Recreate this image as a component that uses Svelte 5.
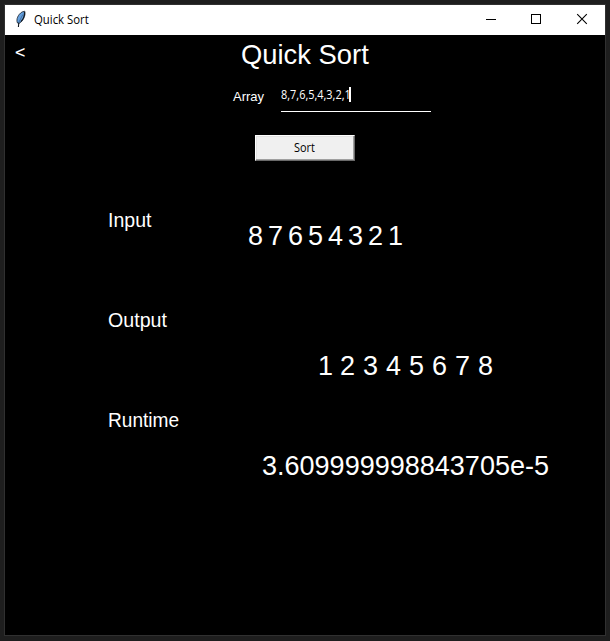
<script>
  let array = $state('8,7,6,5,4,3,2,1');
  const input = [8, 7, 6, 5, 4, 3, 2, 1];
  const output = [1, 2, 3, 4, 5, 6, 7, 8];
</script>

<div class="desktop">
  <main class="window">
    <header>
      <svg class="feather" width="12" height="18" viewBox="0 0 12 18">
        <path d="M2.5 13C0.8 9.5 3 4.5 7 2L9.7 1.2C10.8 4 9 9 6.6 11.5L4 13.5Z" fill="#64a0df" stroke="#18202b" stroke-width=".8" />
        <path d="M3.4 17L3.8 12.5M9.4 2C10 5 8.3 9.4 5.8 11.7" fill="none" stroke="#121820" stroke-width="1.1" />
        <path d="M4 12L7.8 4.5" fill="none" stroke="#294f7b" stroke-width=".6" />
      </svg>
      <span class="caption"><span>Quick Sort</span></span>
      <svg class="controls" width="138" height="30" viewBox="0 0 138 30" fill="none" stroke="#000">
        <path d="M19 14.5h10M64.5 9.5h9v9h-9z" shape-rendering="crispEdges" />
        <path d="M110.2 9.2l9.6 9.6M119.8 9.2l-9.6 9.6" stroke-width="1.1" />
      </svg>
    </header>
    <section class="top">
      <span class="back">&lt;</span>
      <h1><span>Quick Sort</span></h1>
    </section>
    <div class="form">
      <span class="label"><span>Array</span></span>
      <div class="entry"><span class="value">{array}</span><i></i></div>
    </div>
    <button><span>Sort</span></button>
    <div class="results">
      <div class="row"><span class="name input"><span>Input</span></span><div class="numbers in">{#each input as n}<span>{n}</span>{/each}</div></div>
      <div class="row"><span class="name output"><span>Output</span></span><div class="numbers out">{#each output as n}<span>{n}</span>{/each}</div></div>
      <div class="row"><span class="name runtime"><span>Runtime</span></span><div class="numbers time"><span>3.609999998843705e-5</span></div></div>
    </div>
  </main>
</div>

<style>
  :global(body) { margin: 0; background: #1e1e1e; }
  .desktop { box-sizing: border-box; width: 610px; height: 641px; padding: 4px; background: #1e1e1e; overflow: hidden; }
  .window { box-sizing: border-box; width: 602px; height: 632px; border: 1px solid #303030; background: #000; color: #fff; font-family: "Liberation Sans", Arial, sans-serif; }
  header { display: flex; height: 30px; background: #fff; color: #000; }
  .feather { margin: 5px 0 0 10px; }
  .caption { margin-left: 7px; flex: 1; font: 12px/30px "Open Sans", "Noto Sans", sans-serif; }
  .caption span, h1 span, .label span, .name span, .value, .numbers span, button span { display: inline-block; white-space: nowrap; transform-origin: left center; }
  .caption span { transform: scaleX(.945); }
  .top { display: flex; height: 50px; }
  .back { width: 236px; font: 17px/34px "DejaVu Sans Mono", monospace; text-indent: 10px; }
  h1 { margin: 0; font-size: 28px; line-height: 39px; font-weight: 400; }
  h1 span { transform: scaleX(.978); }
  .form { display: flex; height: 50px; padding-left: 228px; }
  .label { width: 48px; font-size: 13px; line-height: 23px; }
  .entry { display: flex; width: 150px; height: 26px; border-bottom: 1px solid #fff; }
  .value { width: 68px; font: 12px/19px "Open Sans", "Noto Sans", sans-serif; transform: scaleX(.91); }
  .entry i { width: 2px; height: 15px; margin-top: 2px; background: #fff; }
  button { display: block; box-sizing: border-box; width: 100px; height: 26px; margin: 0 0 0 250px; padding: 0 1px 1px 0; border: 1px solid; border-color: #fff #696969 #696969 #fff; border-radius: 0; background: #f0f0f0; box-shadow: inset -1px -1px #a0a0a0, inset 1px 1px #e3e3e3; color: #000; font: 12px/23px "Open Sans", "Noto Sans", sans-serif; }
  button span { transform: scaleX(.91); transform-origin: center; }
  .results { padding: 44px 0 0 103px; }
  .row { display: flex; height: 100px; }
  .name { font-size: 21px; line-height: 30px; width: 140px; }
  .input span { transform: scaleX(.93); }
  .output span { transform: scaleX(.935); }
  .runtime span { transform: scaleX(.91); }
  .numbers { display: flex; font-size: 28px; line-height: 30px; }
  .numbers span { transform: scaleX(.965); }
  .in span { width: 20px; }
  .out span { width: 22.9px; }
  .in { padding-top: 16px; }
  .out { padding-top: 46px; margin-left: 69.5px; }
  .time { padding-top: 46px; margin-left: 14px; }
</style>
